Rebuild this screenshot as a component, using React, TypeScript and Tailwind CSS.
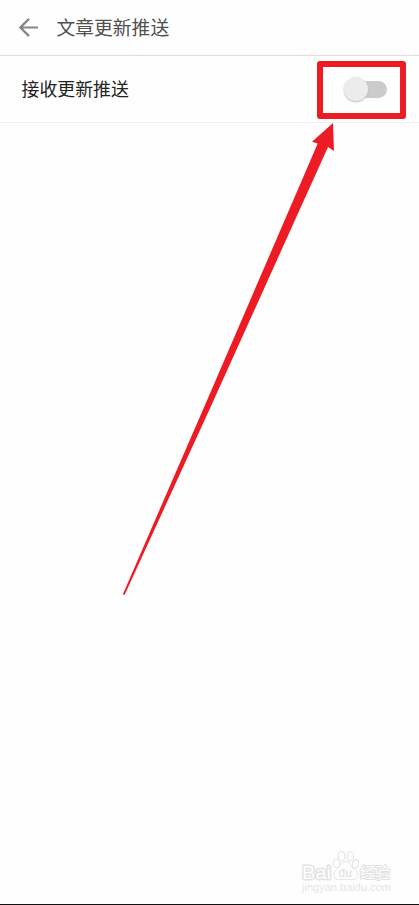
function Watermark() {
  return (
    <svg
      className="absolute left-[296px] top-[846px] h-[52px] w-[104px]"
      viewBox="296 846 104 52"
      fill="none"
      stroke="#e2e2e2"
      strokeWidth="1"
      fontFamily='"Liberation Sans", "Noto Sans CJK SC", sans-serif'
    >
      <text x="302" y="879" fontSize="18.500" fill="#fff" strokeWidth="2.800" strokeLinejoin="round" paintOrder="stroke" textLength="29" lengthAdjust="spacingAndGlyphs">Bai</text>
      <g fill="#fefefe">
        <ellipse cx="336.500" cy="863.500" rx="3.200" ry="4.300" transform="rotate(-12 336.5 863.5)" />
        <ellipse cx="341.500" cy="856" rx="3.300" ry="4.500" />
        <ellipse cx="350.300" cy="856.300" rx="3.300" ry="4.500" transform="rotate(10 350.3 856.3)" />
        <ellipse cx="355.500" cy="864" rx="3" ry="4.200" transform="rotate(15 355.5 864)" />
        <path d="M345.500 861.500c-4 0-5 4-7.500 6.500s-5 4.500-4 8 4 4 6.500 3.500 7-.6 10 0 6.500-.5 7-4-2-5-4.500-7.500-3.500-6.500-7.500-6.500Z" />
      </g>
      <text x="338.500" y="877" fontSize="12" fill="#dcdcdc" stroke="none">du</text>
      <text x="360" y="878" fontSize="15" fill="#fff" strokeWidth="2" strokeLinejoin="round" paintOrder="stroke">经验</text>
      <text x="302" y="891" fontSize="10" fill="#e6e6e6" stroke="none" textLength="89" lengthAdjust="spacingAndGlyphs">jingyan.baidu.com</text>
    </svg>
  );
}

export default function App() {
  return (
    <div className="relative flex h-[905px] w-[419px] flex-col overflow-hidden border-b border-[#111] bg-[#fefefe] font-['Noto_Sans_CJK_SC',sans-serif]">
      <header className="flex h-14 items-center border-b border-[#dedede] pl-[19px]">
        <button aria-label="返回" className="size-[19px]">
          <svg className="block size-[19px]" viewBox="0 0 19 19" fill="none" stroke="#858585" strokeWidth="2.200">
            <path d="M19 9.500H1.800M10 .9 1.400 9.500 10 18.100" />
          </svg>
        </button>
        <h1 className="pb-0.5 pl-[18.5px] text-[18.8px] leading-7 text-[#505050]">文章更新推送</h1>
      </header>
      <main>
        <div className="flex h-[67px] items-center justify-between border-b border-[#eee] pl-[21.500px] pr-8">
          <span className="pb-0.5 text-[17.9px] leading-7 text-[#222]">接收更新推送</span>
          <button role="switch" aria-checked="false" aria-label="接收更新推送" className="flex h-6 w-[43px] items-center">
            <span className="z-10 size-6 shrink-0 rounded-full bg-[#ececec] shadow-[0_1px_2px_#bbb]" />
            <span className="-ml-3 h-[17px] w-[31px] rounded-full bg-[#cbcbcb]" />
          </button>
        </div>
      </main>
      <div className="absolute left-[317px] top-[61px] h-[58px] w-[89px] rounded-[3px] border-[6px] border-[#ed1c24]" />
      <svg className="pointer-events-none absolute inset-0 h-[905px] w-[419px]" viewBox="0 0 419 905" fill="#ed1c24">
        <path d="M333 123 334 151 328 147 211.500 405 125 594Q123.500 596 123 594L205 405 317.700 143.500 312 141.700Z" />
      </svg>
      <Watermark />
    </div>
  );
}
